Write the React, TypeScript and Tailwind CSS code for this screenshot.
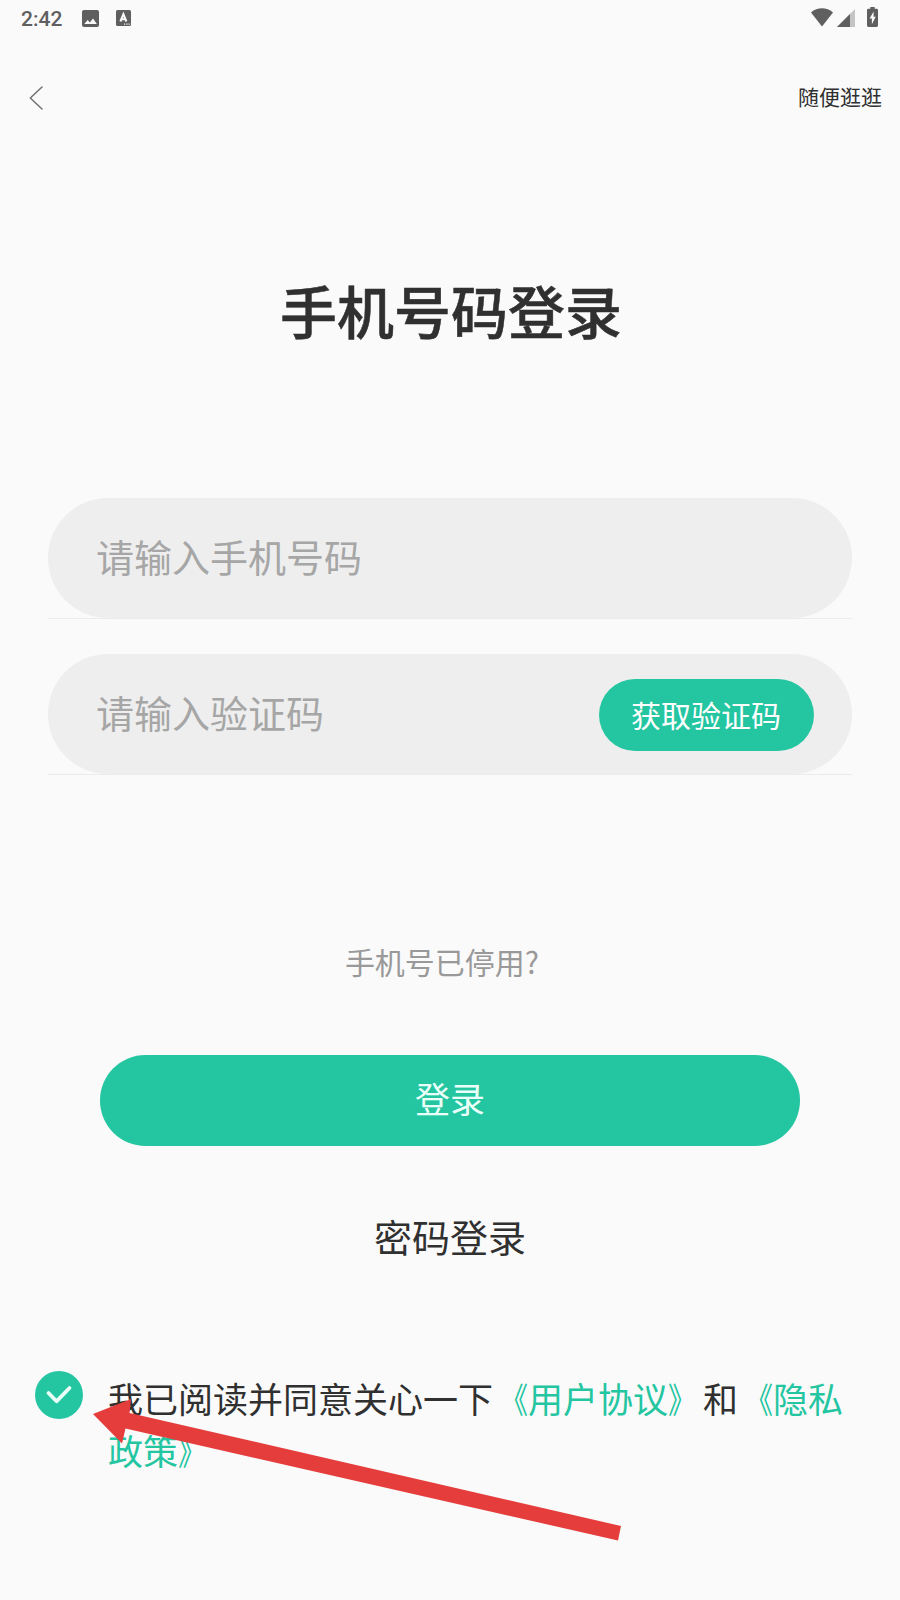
import React from 'react';

const StatusBar: React.FC = () => (
  <div className="h-9 flex items-center pl-[21px] pr-[22px] text-[#5f5f5f]">
    <span className="font-['Roboto'] font-medium text-[21px] leading-9 w-[61px] pt-[2px]">2:42</span>
    <svg className="w-[17px] h-[17px]" viewBox="0 0 17 17" fill="none">
      <rect width="17" height="17" rx="2" fill="currentColor" />
      <path d="M2.3 14 L5.7 10 L7.8 12.4 L11 8.4 L14.9 14 Z" fill="#fafafa" />
    </svg>
    <svg className="w-[15px] h-4 ml-[17px]" viewBox="0 0 15 16" fill="none">
      <rect width="15" height="16" rx="1.5" fill="currentColor" />
      <path d="M4.4 11.5 L7.4 4.2 L10.4 11.5 M5.5 9.2 H9.3" stroke="#fafafa" strokeWidth="2" />
      <path d="M8 14.2 h1.2 M10.3 14.2 h1.2 M12.6 14.2 h1.2" stroke="#fafafa" strokeWidth="1.2" />
    </svg>
    <div className="ml-auto flex items-center pb-[2px]">
      <svg className="w-[22px] h-[19px]" viewBox="0 0 22 19">
        <path d="M0 4.4 C6.5 -1.1 15.5 -1.1 22 4.4 L11 18.6 Z" fill="currentColor" />
      </svg>
      <svg className="w-[18px] h-[18px] ml-1 mt-[2px]" viewBox="0 0 18 18">
        <path d="M18 0 V18 H0 Z" fill="#c4c4c4" />
        <path d="M13 5 V18 H0 Z" fill="currentColor" />
      </svg>
      <svg className="w-[11px] h-5 ml-3" viewBox="0 0 11 20">
        <path d="M3.3 0 H7.7 V1.8 H9.6 Q11 1.8 11 3.2 V18.6 Q11 20 9.6 20 H1.4 Q0 20 0 18.6 V3.2 Q0 1.8 1.4 1.8 H3.3 Z" fill="currentColor" />
        <path d="M6.6 4.6 L2.6 11.6 H4.9 V17.2 L8.7 9.8 H6.6 Z" fill="#fafafa" />
      </svg>
    </div>
  </div>
);

const fields = [
  { placeholder: '请输入手机号码', action: '' },
  { placeholder: '请输入验证码', action: '获取验证码' },
];

// slightly narrow book-title brackets that keep their full-width advance
const Open: React.FC = () => <span className="inline-block origin-right scale-x-[0.8]">《</span>;
const Close: React.FC = () => <span className="inline-block origin-left scale-x-[0.8]">》</span>;

const App: React.FC = () => {
  return (
    <main
      lang="zh-CN"
      className="relative w-[900px] h-[1600px] overflow-hidden bg-[#fafafa] text-[#303030] font-['Noto_Sans_CJK_SC',sans-serif] flex flex-col"
    >
      <StatusBar />

      <header className="h-[124px] flex items-center justify-between pl-[29px] pr-[18px]">
        <svg className="w-[14px] h-6" viewBox="0 0 14 24" fill="none">
          <path d="M13 1 L1.3 12 L13 23" stroke="#707070" strokeWidth="1.5" strokeLinecap="round" strokeLinejoin="round" />
        </svg>
        <button className="text-[21px] leading-[30px] -mt-[4px]">随便逛逛</button>
      </header>

      <h1 className="mt-[109px] pl-[2px] text-center text-[57px] leading-[80px] font-medium [-webkit-text-stroke:0.5px_#303030]">
        手机号码登录
      </h1>

      <div className="mt-[149px] px-12 flex flex-col gap-[35px]">
        {fields.map((field) => (
          <div key={field.placeholder} className="border-b border-[#ebebeb]">
            <div className="h-[120px] rounded-full bg-[#eeeeee] pl-12 pr-[38px] flex items-center justify-between">
              <span className="text-[38px] leading-[60px] text-[#a6a6a6] -mt-[4px]">{field.placeholder}</span>
              {field.action && (
                <button className="w-[215px] h-[72px] rounded-full bg-[#24c5a1] text-white text-[30px] leading-[70px] pb-[2px] pr-[1px] mt-[2px]">
                  {field.action}
                </button>
              )}
            </div>
          </div>
        ))}
      </div>

      <p className="mt-[166px] pr-4 text-center text-[30px] leading-[40px] text-[#999999]">手机号已停用?</p>

      <button className="mt-[74px] mx-[100px] h-[91px] shrink-0 rounded-full bg-[#24c5a1] text-[#eafff9] text-[35px] leading-[86px] pb-[5px]">
        登录
      </button>

      <button className="mt-[60px] text-[38px] leading-[60px]">密码登录</button>

      <div className="mt-[105px] pl-[35px] flex items-start">
        <svg className="w-12 h-12 shrink-0" viewBox="0 0 48 48" fill="none">
          <circle cx="24" cy="24" r="24" fill="#24c5a1" />
          <path d="M13.5 22 L21.5 30.3 L34.5 17" stroke="#e8fff8" strokeWidth="3.8" strokeLinecap="round" strokeLinejoin="round" />
        </svg>
        <p className="ml-[25px] mt-px text-[35px] leading-[52px] whitespace-nowrap">
          我已阅读并同意关心一下<span className="text-[#24c5a1]"><Open />用户协议<Close /></span>和
          <span className="text-[#24c5a1]"><Open />隐私<br />政策<Close /></span>
        </p>
      </div>

      {/* red pointer over the agreement row */}
      <svg className="absolute left-[90px] top-[1390px] w-[540px] h-[160px] pointer-events-none" viewBox="90 1390 540 160">
        <path d="M93 1414 L131 1399 L129.5 1413 L621 1526 L618 1540.5 L125.5 1428.5 L122 1443.5 Z" fill="#e43d3c" />
      </svg>
    </main>
  );
};

export default App;
